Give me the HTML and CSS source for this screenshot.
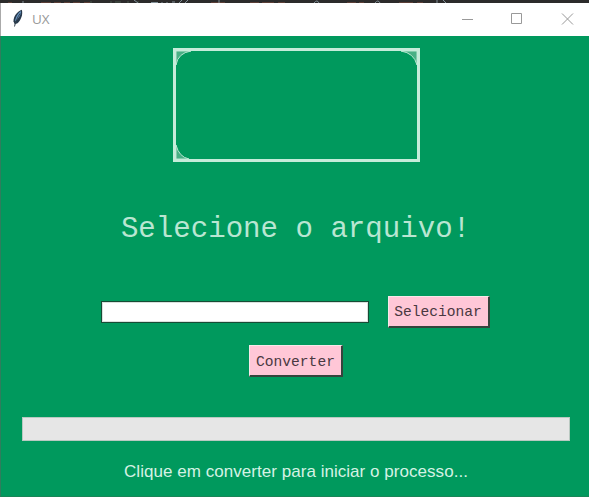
FILE: index.html
```html
<!DOCTYPE html>
<html lang="pt-BR">
<head>
<meta charset="utf-8">
<title>UX</title>
<link rel="stylesheet" href="styles.css">
</head>
<body>
<div class="backdrop" aria-hidden="true">
  <svg width="589" height="4" viewBox="0 0 589 4" fill="none" stroke-width="1">
    <path stroke="#5b3e36" d="M8 2.500h4m29 0h10m3 0h7m3 0h6m3 0h7m4 0h6m121 0h14m25 0h9m3 0h12m4 0h7m62 0h9m3 0h5m35 0h14m4 0h6"/>
    <path stroke="#46574a" d="M91 1v2m20-2v2m4-1h6m7-1v2m10-2v2"/>
    <path stroke="#829098" d="M23 1v2m111-3 4 3m13-.5h7m4-.5v1m5-1v1m5-1h3m7-2-3 3m9-3-3 3m34-3v3M314 3q3-4 5 0m56 0q3-4 5 0m57-3v3m6-3 3 3"/>
  </svg>
</div>
<header class="titlebar">
  <svg class="feather" width="12" height="19" viewBox="0 0 12 19">
    <path d="M9.800.800C5.500 2.200 1.300 7.200 1.500 12.500l1.300 2.800 2.700-1C9 11 11.200 5.500 9.800.800Z" fill="#26384b"/>
    <path d="M9 2C6 3.800 3.500 8 3 12.500 6 10 9 6.500 9 2Z" fill="#6795c4"/>
    <path d="M8 4.500C5.500 8.500 3.300 13 2.500 17.500" fill="none" stroke="#34414d" stroke-width="1"/>
  </svg>
  <span class="title">UX</span>
  <svg class="controls" width="114" height="14" viewBox="0 0 114 14" fill="none" stroke="#999">
    <path d="M1 7.500h11M50.500 1.500h10v10h-10zM101 1.500l11 11m0-11-11 11"/>
  </svg>
</header>
<main class="window">
  <div class="logo">
    <svg width="241" height="108" viewBox="0 0 241 108">
      <g fill="#48b085" stroke="#b9e6d2" stroke-width="1">
        <path d="M0 0h15Q2 2 0 14Z"/>
        <path d="M241 0h-16q13 2 16 14Z"/>
        <path d="M0 108V94q3 12 13 14Z"/>
      </g>
    </svg>
  </div>
  <h1 class="heading">Selecione o arquivo!</h1>
  <div class="file-row">
    <input class="entry" type="text" aria-label="Arquivo">
    <button class="btn select">Selecionar</button>
  </div>
  <button class="btn convert">Converter</button>
  <div class="progress"></div>
  <p class="status">Clique em converter para iniciar o processo...</p>
</main>
</body>
</html>
```
FILE: styles.css
```css
* { box-sizing: border-box; }
body {
  margin: 0;
  width: 589px;
  height: 497px;
  overflow: hidden;
  background: #00995d;
  font-family: "Liberation Sans", Arial, sans-serif;
}
.backdrop { height: 3px; background: #2c2b2b; overflow: hidden; }
.backdrop svg { display: block; }
.titlebar {
  display: flex;
  align-items: center;
  height: 33px;
  padding: 0 14px 0 11px;
  background: #fff;
  border-left: 1px solid #aaa;
}
.feather { display: block; margin-top: -2px; }
.title { margin-left: 8px; color: #999; font: 13.5px "Open Sans", sans-serif; margin-top: -1px; }
.controls { margin-left: auto; margin-top: -1px; }
.window {
  display: flex;
  flex-direction: column;
  align-items: center;
  height: 461px;
  padding-top: 12px;
  border-left: 1px solid #2f7d5d;
  border-bottom: 1px solid #188657;
}
.logo {
  width: 247px;
  height: 114px;
  margin-left: 2px;
  border: 3px solid #c5ecda;
  flex: none;
}
.logo svg { display: block; }
.heading {
  margin: 50px 0 0 1px;
  height: 36px;
  color: #b9e6d2;
  font: 400 29.1px/36px "Courier New", "Liberation Mono", monospace;
  white-space: pre;
}
.file-row { display: flex; align-items: center; gap: 19px; margin-top: 47px; height: 33px; }
.entry {
  width: 268px;
  height: 22px;
  padding: 0 3px;
  border: 1px solid #174b35;
  outline: 0;
  background: #fff;
  box-shadow: inset 0 0 0 1px #d9e1dd;
}
.btn {
  height: 32px;
  padding: 3px 0 0;
  border: solid;
  border-width: 1px 2px 2px 1px;
  border-color: #f6e9e9 #35443d #35443d #f6e9e9;
  background: #ffc7d7;
  color: #4a3841;
  font: 14.6px/1 "Courier New", "Liberation Mono", monospace;
}
.select { width: 102px; }
.convert { width: 94px; margin: 17px 0 0 2px; flex: none; }
.progress {
  width: 548px;
  height: 24px;
  margin: 40px 0 0 2px;
  border: 1px solid #b9c9c1;
  background: #e6e6e6;
  flex: none;
}
.status {
  margin: 21px 0 0 2px;
  color: #d5f2e4;
  font-size: 17px;
  line-height: 20px;
  letter-spacing: 0.04px;
  white-space: nowrap;
}
```
